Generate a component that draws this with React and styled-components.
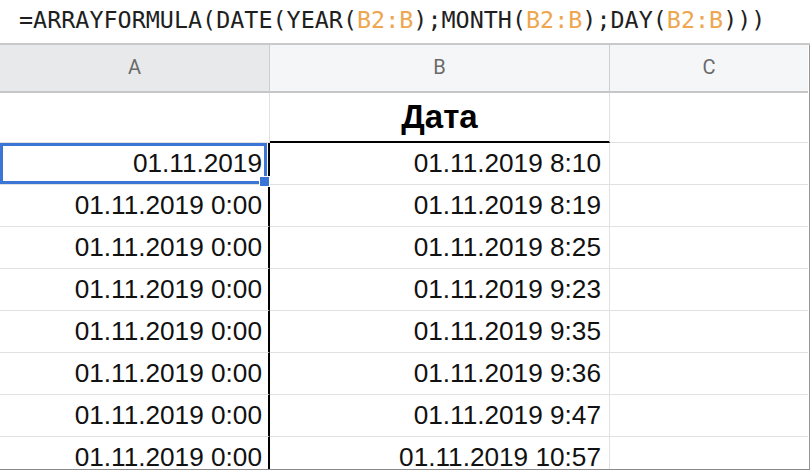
import React from "react";
import styled, { createGlobalStyle } from "styled-components";

const GlobalStyle = createGlobalStyle`
  body {
    margin: 0;
    background: #fff;
    overflow: hidden;
  }
`;

const Frame = styled.div`
  width: 810px;
  height: 470px;
  overflow: hidden;
  position: relative;
  box-sizing: border-box;
  border-bottom: 1px solid #8a8a8a;
`;

const FormulaBar = styled.div`
  height: 45px;
  display: flex;
  align-items: center;
  padding: 0 0 4px 19px;
  box-sizing: border-box;
  border-bottom: 2px solid #c9c9c9;
  font-family: "DejaVu Sans Mono", monospace;
  font-size: 23.4px;
  color: #1f1f1f;
  white-space: nowrap;
`;

const Ref = styled.span`
  color: #eea64f;
`;

const Grid = styled.div`
  width: 809px;
  display: grid;
  grid-template-columns: 270px 340px 198px;
  grid-template-rows: 48px 50px;
  grid-auto-rows: 42px;
  border-right: 1px solid #979797;
`;

const HeadCell = styled.div`
  box-sizing: border-box;
  display: flex;
  align-items: center;
  justify-content: center;
  padding-bottom: 2px;
  background: ${(p) => (p.$active ? "#e8e9eb" : "#f5f6f7")};
  border-bottom: 2px solid #c6c6c6;
  border-right: ${(p) => (p.$last ? "none" : "1px solid #cdcdcd")};
  font-family: Roboto, "Liberation Sans", sans-serif;
  font-size: 20px;
  color: #6a6a6a;
`;

const TitleCell = styled.div`
  box-sizing: border-box;
  display: flex;
  align-items: center;
  justify-content: center;
  border-right: ${(p) => (p.$last ? "none" : "1px solid #e1e1e1")};
  border-bottom: ${(p) => (p.$underline ? "2px solid #000" : "1px solid #e1e1e1")};
  font-family: "Liberation Sans", Arial, sans-serif;
  font-weight: 700;
  font-size: 33px;
  color: #000;
`;

const Cell = styled.div`
  position: relative;
  box-sizing: border-box;
  display: flex;
  align-items: center;
  justify-content: flex-end;
  padding-right: ${(p) => (p.$edge ? "6px" : "8px")};
  border-bottom: 1px solid #e1e1e1;
  border-right: ${(p) =>
    p.$edge ? "2px solid #000" : p.$last ? "none" : "1px solid #e1e1e1"};
  font-family: "Liberation Sans", Arial, sans-serif;
  font-size: 26.2px;
  color: #111;
  white-space: nowrap;
`;

const Selection = styled.div`
  position: absolute;
  z-index: 2;
  top: 0;
  left: 0;
  width: 267px;
  height: 41px;
  box-sizing: border-box;
  border: 3px solid #3b76d6;
  pointer-events: none;
`;

const FillHandle = styled.div`
  position: absolute;
  right: -6px;
  bottom: -6px;
  width: 11px;
  height: 11px;
  box-sizing: border-box;
  background: #3b76d6;
  border: 1px solid #fff;
`;

const rows = [
  ["01.11.2019", "01.11.2019 8:10"],
  ["01.11.2019 0:00", "01.11.2019 8:19"],
  ["01.11.2019 0:00", "01.11.2019 8:25"],
  ["01.11.2019 0:00", "01.11.2019 9:23"],
  ["01.11.2019 0:00", "01.11.2019 9:35"],
  ["01.11.2019 0:00", "01.11.2019 9:36"],
  ["01.11.2019 0:00", "01.11.2019 9:47"],
  ["01.11.2019 0:00", "01.11.2019 10:57"],
];

export default function App() {
  return (
    <Frame>
      <GlobalStyle />
      <FormulaBar>
        =ARRAYFORMULA(DATE(YEAR(<Ref>B2:B</Ref>);MONTH(<Ref>B2:B</Ref>);DAY(
        <Ref>B2:B</Ref>)))
      </FormulaBar>
      <Grid>
        <HeadCell $active>A</HeadCell>
        <HeadCell>B</HeadCell>
        <HeadCell $last>C</HeadCell>

        <TitleCell />
        <TitleCell $underline>Дата</TitleCell>
        <TitleCell $last />

        {rows.map(([a, b], i) => (
          <React.Fragment key={i}>
            <Cell $edge>
              {a}
              {i === 0 && (
                <Selection>
                  <FillHandle />
                </Selection>
              )}
            </Cell>
            <Cell>{b}</Cell>
            <Cell $last />
          </React.Fragment>
        ))}
      </Grid>
    </Frame>
  );
}
